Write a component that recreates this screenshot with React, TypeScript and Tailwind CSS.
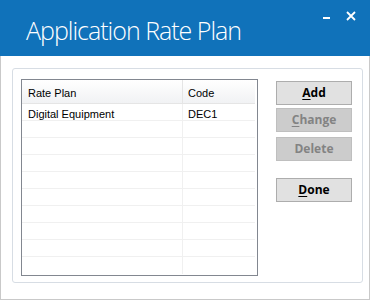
const rows = [
  { plan: "Digital Equipment", code: "DEC1" },
  ...Array.from({ length: 9 }, () => ({ plan: "", code: "" })),
];

function Btn({ label, disabled, className = "" }: { label: string; disabled?: boolean; className?: string }) {
  return (
    <button
      className={`block w-[76px] h-[24px] border text-[12px] font-bold leading-none ${className} ${
        disabled
          ? "bg-[#cccccc] border-[#bfbfbf] text-[#838383]"
          : "bg-[#e1e1e1] border-[#adadad] text-black"
      }`}
      style={{ fontFamily: '"Open Sans", sans-serif' }}
    >
      {label === "Delete" ? (
        label
      ) : (
        <>
          <span className="underline underline-offset-2">{label[0]}</span>
          {label.slice(1)}
        </>
      )}
    </button>
  );
}

export default function App() {
  return (
    <div className="w-[370px] h-[300px] bg-white border-x border-b border-[#c9c9c9] flex flex-col">
      <div className="h-[56px] bg-[#1072ba] flex items-start -mx-px">
        <div
          className="pl-[26px] pt-[18px] text-[25px] font-light tracking-[-1px] text-white leading-none"
          style={{ fontFamily: '"Open Sans", sans-serif' }}
        >
          Application Rate Plan
        </div>
        <div className="ml-auto flex items-start pt-[10px] pr-[14px] gap-[16px]">
          <div className="w-[7px] h-[2px] bg-white mt-[7px]" />
          <svg width="10" height="10" viewBox="0 0 10 10" className="mt-[1px]">
            <path d="M1 1 L9 9 M9 1 L1 9" stroke="white" strokeWidth="1.8" />
          </svg>
        </div>
      </div>
      <div className="pl-[11px] pt-[12px]">
        <div className="w-[351px] h-[215px] border border-[#d7dde4] rounded-[3px] pl-[8px] pt-[10px] flex">
          <div
            className="w-[237px] h-[197px] border border-[#828790] flex flex-col text-[11px] text-black"
            style={{ fontFamily: '"Liberation Sans", sans-serif' }}
          >
            <div className="h-[24px] flex border-b border-[#e5e5e5] bg-gradient-to-b from-white to-[#f1f2f4] mr-[2px]">
              <div className="w-[161px] border-r border-[#e5e5e5] pl-[6px] pt-[5px]">Rate Plan</div>
              <div className="flex-1 pl-[5px] pt-[5px]">Code</div>
            </div>
            {rows.map((r, i) => (
              <div key={i} className="h-[17px] flex border-b border-[#f0f0f0] mr-[2px] last:border-b-0">
                <div className="w-[161px] border-r border-[#f0f0f0] pl-[6px] pt-[2px]">{r.plan}</div>
                <div className="flex-1 pl-[5px] pt-[2px]">{r.code}</div>
              </div>
            ))}
          </div>
          <div className="ml-[18px] pt-[2px] flex flex-col">
            <Btn label="Add" />
            <Btn label="Change" disabled className="mt-[3px]" />
            <Btn label="Delete" disabled className="mt-[5px]" />
            <Btn label="Done" className="mt-[17px]" />
          </div>
        </div>
      </div>
    </div>
  );
}
